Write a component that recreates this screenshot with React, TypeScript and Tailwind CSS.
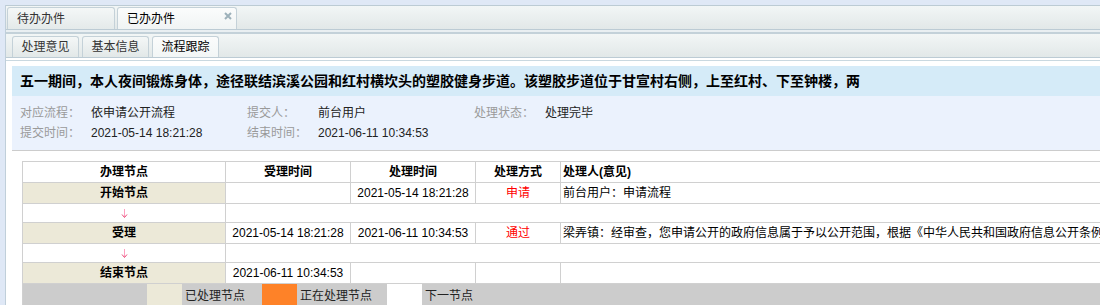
import React from "react";

const C1 = "w-[203px] shrink-0 border-r border-[#d0d0d0]";
const C2 = "w-[125px] shrink-0 border-r border-[#d0d0d0]";
const C3 = "w-[125px] shrink-0 border-r border-[#d0d0d0]";
const C4 = "w-[85px] shrink-0 border-r border-[#d0d0d0]";
const C5 = "flex-1 border-r border-[#d0d0d0]";

function Arrow() {
  return (
    <svg width="7" height="9" viewBox="0 0 7 9" className="block">
      <line x1="3.5" y1="0" x2="3.5" y2="8" stroke="#ff9fc0" strokeWidth="1" />
      <path d="M1 5.5 L3.5 8.5 L6 5.5" fill="none" stroke="#e8507a" strokeWidth="1" />
    </svg>
  );
}

function ArrowRow() {
  return (
    <div className="flex h-[19px] border-b border-[#d0d0d0]">
      <div className={`${C1} flex items-center justify-center bg-white pt-[1px]`}>
        <Arrow />
      </div>
      <div className="flex-1 bg-white" />
    </div>
  );
}

export default function App() {
  return (
    <div className="w-[1100px] h-[305px] overflow-hidden bg-[#dfe8f6] pt-[5px] pl-[5px] text-[12px] leading-none font-['Liberation_Sans','Noto_Sans_CJK_SC',sans-serif]">
      <div className="h-[300px] w-[1095px] border-l border-[#c0cfda] bg-white flex flex-col">
        {/* outer tab bar */}
        <div className="h-[25px] shrink-0 border-y border-[#bccbd4] bg-gradient-to-b from-[#f2f6f6] to-[#e2e8e8] flex items-end pl-[1px] gap-[2px]">
          <div className="h-[22px] w-[108px] border border-b-0 border-[#c4d1d8] rounded-t-[3px] bg-gradient-to-b from-[#f4f7f7] to-[#e4eaea] flex items-center pl-[9px] text-[#333]">
            待办办件
          </div>
          <div className="relative h-[22px] w-[120px] border border-b-0 border-[#c4d1d8] rounded-t-[3px] bg-gradient-to-b from-[#fbfcfc] to-[#f0f4f4] flex items-center pl-[9px] text-black">
            已办办件
            <svg width="8" height="8" viewBox="0 0 8 8" className="absolute right-[4px] top-[4px]">
              <path d="M1 1 L7 7 M7 1 L1 7" stroke="#9db1ba" strokeWidth="2" />
            </svg>
          </div>
        </div>
        <div className="h-[2px] shrink-0 bg-[#e9eff2]" />
        {/* inner tab bar */}
        <div className="h-[26px] shrink-0 border-t-2 border-b border-t-[#c3d1d9] border-b-[#bccbd4] bg-gradient-to-b from-[#f2f6f6] to-[#e2e8e8] flex items-end pl-[6px] gap-[3px]">
          <div className="h-[21px] w-[67px] border border-b-0 border-[#c4d1d8] rounded-t-[3px] bg-gradient-to-b from-[#f4f7f7] to-[#e2e8e8] flex items-center justify-center text-[#333]">
            处理意见
          </div>
          <div className="h-[21px] w-[67px] border border-b-0 border-[#c4d1d8] rounded-t-[3px] bg-gradient-to-b from-[#f4f7f7] to-[#e2e8e8] flex items-center justify-center text-[#333]">
            基本信息
          </div>
          <div className="h-[21px] w-[67px] border border-b-0 border-[#c4d1d8] rounded-t-[3px] bg-gradient-to-b from-[#fbfcfc] to-[#f2f6f6] flex items-center justify-center text-black">
            流程跟踪
          </div>
        </div>
        <div className="h-[2px] shrink-0 bg-white" />
        {/* content */}
        <div className="flex-1 border-t border-[#c9d8e0] bg-white pt-[5px] pl-[6px] flex flex-col min-h-0">
          <div className="h-[30px] shrink-0 bg-[#d5ebf8] flex items-center pl-[8px] text-[14px] font-bold text-black whitespace-nowrap">
            五一期间，本人夜间锻炼身体，途径联结滨溪公园和红村横坎头的塑胶健身步道。该塑胶步道位于甘宣村右侧，上至红村、下至钟楼，两
          </div>
          <div className="h-[55px] shrink-0 bg-[#ebf2fd] border-b border-[#cccccc] pt-[7px] pl-[8px] flex flex-col">
            <div className="h-[20px] flex items-center">
              <div className="w-[227px] flex items-center">
                <span className="w-[71px] text-[#9a9a9a]">对应流程：</span>
                <span className="text-[#222]">依申请公开流程</span>
              </div>
              <div className="w-[227px] flex items-center">
                <span className="w-[71px] text-[#9a9a9a]">提交人：</span>
                <span className="text-[#222]">前台用户</span>
              </div>
              <div className="flex items-center">
                <span className="w-[71px] text-[#9a9a9a]">处理状态：</span>
                <span className="text-[#222]">处理完毕</span>
              </div>
            </div>
            <div className="h-[20px] flex items-center">
              <div className="w-[227px] flex items-center">
                <span className="w-[71px] text-[#9a9a9a]">提交时间：</span>
                <span className="text-[#222]">2021-05-14 18:21:28</span>
              </div>
              <div className="w-[227px] flex items-center">
                <span className="w-[71px] text-[#9a9a9a]">结束时间：</span>
                <span className="text-[#222]">2021-06-11 10:34:53</span>
              </div>
            </div>
          </div>
          {/* table */}
          <div className="mt-[10px] ml-[10px] w-[1200px] border-l border-t border-[#d0d0d0] text-black">
            <div className="flex h-[21px] border-b border-[#d0d0d0] font-bold bg-white">
              <div className={`${C1} flex items-center justify-center`}>办理节点</div>
              <div className={`${C2} flex items-center justify-center`}>受理时间</div>
              <div className={`${C3} flex items-center justify-center`}>处理时间</div>
              <div className={`${C4} flex items-center justify-center`}>处理方式</div>
              <div className={`${C5} flex items-center pl-[2px]`}>处理人(意见)</div>
            </div>
            <div className="flex h-[21px] border-b border-[#d0d0d0] bg-white">
              <div className={`${C1} flex items-center justify-center bg-[#ece9d8] font-bold`}>开始节点</div>
              <div className={`${C2}`} />
              <div className={`${C3} flex items-center justify-center`}>2021-05-14 18:21:28</div>
              <div className={`${C4} flex items-center justify-center text-[#ff0000]`}>申请</div>
              <div className={`${C5} flex items-center pl-[2px] whitespace-nowrap`}>前台用户：申请流程</div>
            </div>
            <ArrowRow />
            <div className="flex h-[21px] border-b border-[#d0d0d0] bg-white">
              <div className={`${C1} flex items-center justify-center bg-[#ece9d8] font-bold`}>受理</div>
              <div className={`${C2} flex items-center justify-center`}>2021-05-14 18:21:28</div>
              <div className={`${C3} flex items-center justify-center`}>2021-06-11 10:34:53</div>
              <div className={`${C4} flex items-center justify-center text-[#ff0000]`}>通过</div>
              <div className={`${C5} flex items-center pl-[2px] whitespace-nowrap overflow-hidden`}>
                梁弄镇：经审查，您申请公开的政府信息属于予以公开范围，根据《中华人民共和国政府信息公开条例》第二十七条之规定，予以公开。
              </div>
            </div>
            <ArrowRow />
            <div className="flex h-[21px] border-b border-[#d0d0d0] bg-white">
              <div className={`${C1} flex items-center justify-center bg-[#ece9d8] font-bold`}>结束节点</div>
              <div className={`${C2} flex items-center justify-center`}>2021-06-11 10:34:53</div>
              <div className={`${C3}`} />
              <div className={`${C4}`} />
              <div className={`${C5}`} />
            </div>
            <div className="flex h-[24px] bg-[#cccccc] text-[#222]">
              <div className="w-[124px] shrink-0" />
              <div className="w-[35px] shrink-0 bg-[#ece9d8]" />
              <div className="w-[80px] shrink-0 flex items-center pl-[3px]">已处理节点</div>
              <div className="w-[35px] shrink-0 bg-[#fe8228]" />
              <div className="w-[90px] shrink-0 flex items-center pl-[3px]">正在处理节点</div>
              <div className="w-[35px] shrink-0 bg-white" />
              <div className="flex items-center pl-[3px]">下一节点</div>
            </div>
          </div>
        </div>
      </div>
    </div>
  );
}
